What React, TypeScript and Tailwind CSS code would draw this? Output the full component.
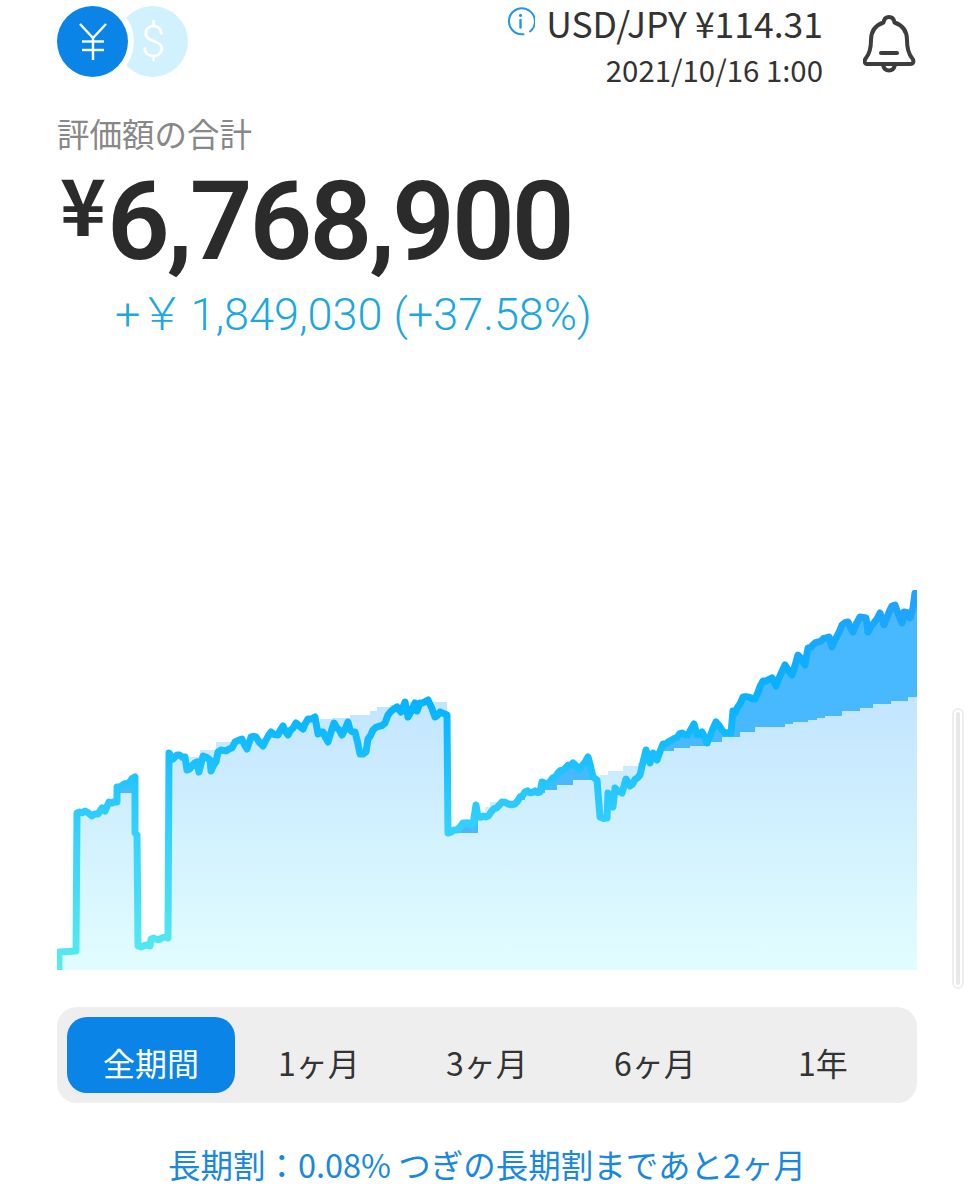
const line: [number, number][] = [
  [59, 972], [59, 952], [76, 951], [77, 813], [85, 811], [92, 816], [98, 814], [102, 808], [105, 811], [109, 802], [117, 802],
  [117, 787], [127, 784], [135, 777], [135, 833], [137, 835], [138, 946], [150, 946], [151, 939], [168, 938], [169, 753],
  [173, 759], [177, 755], [185, 757], [187, 770], [197, 762], [199, 772], [203, 756], [210, 760], [211, 771], [216, 762],
  [218, 752], [232, 748], [235, 742], [242, 739], [247, 749], [251, 737], [256, 737], [263, 746], [271, 732], [278, 735],
  [283, 726], [288, 735], [296, 723], [303, 729], [308, 719], [315, 717], [318, 734], [323, 732], [328, 742], [334, 723],
  [342, 735], [348, 722], [350, 730], [355, 732], [360, 754], [366, 752], [368, 739], [373, 730], [385, 723], [388, 715],
  [397, 707], [401, 712], [405, 702], [408, 717], [415, 703], [417, 711], [420, 703], [428, 700], [435, 717], [440, 712],
  [447, 715], [448, 833], [457, 830], [463, 823], [473, 824], [476, 805], [478, 817], [486, 817], [502, 802], [508, 804],
  [515, 804], [525, 792], [540, 792], [542, 782], [548, 784], [558, 773], [573, 763], [579, 770], [588, 757], [593, 777],
  [597, 780], [600, 817], [607, 818], [608, 793], [613, 807], [615, 788], [622, 793], [626, 779], [630, 786], [640, 775],
  [646, 750], [650, 763], [653, 753], [657, 760], [663, 744], [672, 740], [682, 733], [688, 735], [694, 724], [697, 735],
  [702, 732], [707, 743], [716, 722], [725, 733], [731, 733], [733, 711], [735, 713], [743, 697], [755, 699], [763, 681],
  [772, 678], [776, 686], [785, 665], [792, 675], [798, 655], [805, 665], [808, 648], [818, 642], [829, 637], [832, 647],
  [842, 625], [848, 622], [853, 632], [860, 617], [866, 618], [868, 632], [880, 613], [884, 625], [892, 606], [895, 605],
  [902, 623], [904, 612], [908, 613], [910, 618], [913, 608], [915, 593], [919, 590],
];

const steps: [number, number][] = [
  [57, 952], [77, 815], [100, 810], [108, 803], [117, 793], [135, 833], [138, 946], [151, 940], [168, 755], [185, 757],
  [200, 750], [216, 742], [233, 741], [250, 738], [270, 733], [285, 727], [300, 722], [320, 719], [332, 718], [350, 715],
  [370, 711], [377, 707], [390, 705], [410, 702], [447, 833], [478, 815], [485, 807], [490, 802], [502, 800], [525, 793],
  [545, 790], [557, 785], [573, 780], [600, 775], [608, 771], [623, 766], [638, 763], [643, 753], [663, 751], [674, 748],
  [690, 746], [710, 742], [722, 737], [740, 732], [755, 727], [785, 724], [793, 722], [808, 720], [817, 718], [825, 716],
  [842, 711], [860, 708], [873, 704], [891, 701], [908, 697],
];

const dense: [number, number][] = [];
line.forEach(([x, y], i) => {
  const next = line[i + 1];
  dense.push([x, y]);
  if (!next || next[0] - x < 5 || x < 60) return;
  const n = Math.floor((next[0] - x) / 2.5);
  for (let k = 1; k < n; k++) {
    const px = x + ((next[0] - x) * k) / n;
    const py = y + ((next[1] - y) * k) / n + Math.sin(px * 1.7) * 1.1;
    dense.push([Number(px.toFixed(1)), Number(py.toFixed(1))]);
  }
});

const linePath = dense.map(([x, y], i) => `${i === 0 ? 'M' : 'L'}${x - 57} ${y - 590}`).join(' ');
const basePath =
  'M0 380 ' +
  steps.map(([x, y], i) => (i === 0 ? `L0 ${y - 590}` : `H${x - 57} V${y - 590}`)).join(' ') +
  ' H860 V380 Z';

function Chart() {
  return (
    <svg width="860" height="380" viewBox="0 0 860 380" className="block">
      <defs>
        <linearGradient id="base" gradientUnits="userSpaceOnUse" x1="0" y1="105" x2="0" y2="380">
          <stop offset="0" stopColor="#c2e5ff" />
          <stop offset="1" stopColor="#e2fdff" />
        </linearGradient>
        <linearGradient id="stroke" gradientUnits="userSpaceOnUse" x1="0" y1="0" x2="0" y2="380">
          <stop offset="0" stopColor="#22a2ff" />
          <stop offset="0.3" stopColor="#05b3ff" />
          <stop offset="0.62" stopColor="#33d0ff" />
          <stop offset="1" stopColor="#58ecee" />
        </linearGradient>
        <clipPath id="plot">
          <rect width="860" height="380" />
        </clipPath>
      </defs>
      <g clipPath="url(#plot)">
        <path d={`${linePath} L862 380 L0 380 Z`} fill="#49b9ff" />
        <path d={basePath} fill="url(#base)" />
        <path d={linePath} fill="none" stroke="url(#stroke)" strokeWidth="7" strokeLinejoin="round" strokeLinecap="round" />
      </g>
    </svg>
  );
}

function Coins() {
  return (
    <div className="flex pt-[6px]">
      <div className="relative z-10 flex h-[71px] w-[71px] items-center justify-center rounded-full bg-[#0b84e8] shadow-[0_0_0_6px_#ffffff]">
        <svg width="32" height="38" viewBox="0 0 32 38" fill="none" stroke="#ffffff" strokeWidth="2.4">
          <path d="M3 1 L16 15 L29 1" />
          <path d="M16 15 V37" />
          <path d="M5 18.5 H27" />
          <path d="M5 27 H27" />
        </svg>
      </div>
      <div className="ml-[-11px] flex h-[71px] w-[71px] items-center justify-center rounded-full bg-[#d2f1ff] pl-[1px] font-['Roboto',sans-serif] text-[44px] font-light text-white">
        $
      </div>
    </div>
  );
}

function Bell() {
  return (
    <svg width="54" height="58" viewBox="0 0 54 58" fill="none" stroke="#3d3d3d" strokeWidth="4" strokeLinejoin="round" strokeLinecap="round">
      <path d="M26 2 C23 2 21 4 20.5 7.5 C13 10 8 16 8 25 C8 33 7 38 3 43 C0.5 46 1.5 49 5 49 H47 C50.5 49 51.5 46 49 43 C45 38 44 33 44 25 C44 16 39 10 31.5 7.5 C31 4 29 2 26 2 Z" />
      <path d="M20 50 C21 54 23.5 55.500 26 55.500 C28.500 55.500 31 54 32 50" />
      <path d="M18 38 H34" />
    </svg>
  );
}

function Info() {
  return (
    <svg width="29" height="29" viewBox="0 0 29 29" fill="none" stroke="#2196ee" strokeWidth="2" strokeLinecap="round">
      <path d="M24 24.500 A13 13 0 1 0 17.500 27.200" />
      <path d="M14.500 13 V20.500" strokeWidth="2.400" />
      <path d="M14.500 8.300 V8.600" strokeWidth="3" />
    </svg>
  );
}

const tabs = ['全期間', '1ヶ月', '3ヶ月', '6ヶ月', '1年'];

export default function App() {
  return (
    <div className="relative h-[1200px] w-full overflow-hidden bg-white font-['Noto_Sans_CJK_JP','Noto_Sans',sans-serif]">
      <div className="flex h-[113px] items-start justify-between pl-[57px] pr-[57px]">
        <Coins />
        <div className="flex items-start">
          <div className="flex flex-col items-end">
            <div className="flex h-[46px] items-center gap-[11px] text-[35.5px] text-[#333333]">
              <div className="mt-[-3px]">
                <Info />
              </div>
              <span className="whitespace-nowrap leading-[46px]">USD/JPY ¥114.31</span>
            </div>
            <div className="mt-[1px] text-[29.400px] leading-[44px] text-[#333333]">2021/10/16 1:00</div>
          </div>
          <div className="ml-[40px] pt-[15px]">
            <Bell />
          </div>
        </div>
      </div>

      <div className="pl-[57px] text-[32.500px] leading-[40px] text-[#888888]">評価額の合計</div>

      <div className="flex h-[137px] items-start pl-[60px] text-[#2b2b2b]">
        <span className="mt-[4px] text-[78px] font-bold leading-[90px]">¥</span>
        <span className="ml-[1px] mt-[4px] font-['Roboto',sans-serif] text-[110px] font-semibold leading-[130px] tracking-[-3px]">6,768,900</span>
      </div>

      <div className="flex h-[300px] items-start pl-[115px] font-['Roboto','Noto_Sans_CJK_JP',sans-serif] text-[45px] font-light leading-[50px] text-[#1ba8e0]">
        <span>+</span>
        <span className="ml-[-1px]">￥</span>
        <span className="ml-[6px] whitespace-pre">1,849,030 (+37.58%)</span>
      </div>

      <div className="pl-[57px]">
        <Chart />
      </div>

      <div className="mx-[57px] mt-[37px] grid grid-cols-5 rounded-[20px] bg-[#eeeeee] p-[10px]">
        {tabs.map((tab, i) => (
          <div
            key={tab}
            className={
              i === 0
                ? 'flex h-[76px] items-center justify-center rounded-[20px] bg-[#0a84e6] pt-[14px] text-[32px] leading-none text-white'
                : 'flex h-[76px] items-center justify-center pt-[14px] text-[32px] leading-none text-[#333333]'
            }
          >
            {tab}
          </div>
        ))}
      </div>

      <div className="mt-[36px] text-center text-[32.500px] leading-[50px] text-[#1a88e0]">
        長期割：0.08% つぎの長期割まであと2ヶ月
      </div>

      <div className="absolute left-[952px] top-[708px] h-[281px] w-[12px] rounded-full border-2 border-[#eeeeee] p-[2px]">
        <div className="h-full w-full rounded-full border-2 border-[#e8e8e8]" />
      </div>
    </div>
  );
}
